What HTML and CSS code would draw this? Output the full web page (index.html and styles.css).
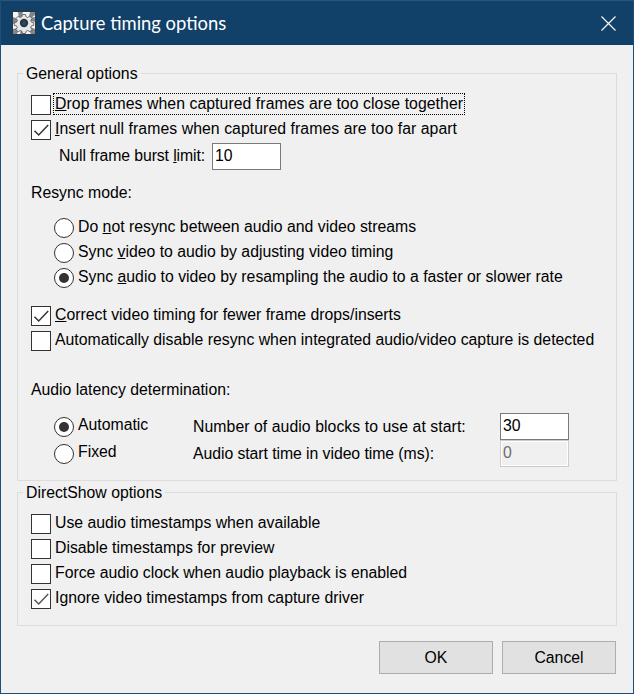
FILE: index.html
```html
<!DOCTYPE html>
<html lang="en">
<head>
    <meta charset="UTF-8">
    <title>Capture timing options</title>
    <link rel="stylesheet" href="styles.css">
</head>
<body>
    <div class="window">
        <div class="titlebar">
            <svg class="app-icon" width="24" height="24" viewBox="0 0 24 24">
                <rect x="0.5" y="0.5" width="23" height="23" fill="#f4f4f4" stroke="#2f353a"/>
                <path d="M1 6l5 2-1 4-4 1zM6 1h5l-1 4-3 2zM23 6v5l-4-1-2-3zM18 1l-1 4 2 2 4-3V1zM1 18l4-1 2 2-2 4H1zM23 18l-5-2-1 3 2 4h4zM8 23l1-5 3 1 1 4z" fill="#7f868c"/>
                <path d="M10.4 3.5h3.2l.5 2.3 1.7.7 2-1.3 2.2 2.2-1.3 2 .7 1.7 2.3.5v2.8l-2.3.5-.7 1.7 1.3 2-2.2 2.2-2-1.3-1.7.7-.5 2.3h-3.2l-.5-2.3-1.7-.7-2 1.3-2.2-2.2 1.3-2-.7-1.7-2.3-.5v-2.8l2.3-.5.7-1.7-1.3-2 2.2-2.2 2 1.3 1.7-.7z" fill="#e6e7e8" stroke="#4a4f54" stroke-width="0.8"/>
                <circle cx="12" cy="12" r="4.2" fill="#30363b"/>
                <circle cx="12" cy="12" r="2.2" fill="#1d4a70"/>
            </svg>
            <span class="title">Capture timing options</span>
            <svg class="close-icon" width="15" height="15" viewBox="0 0 15 15">
                <path d="M0.5 0.5l14 14M14.5 0.5l-14 14" stroke="#fff" stroke-width="1.1" fill="none"/>
            </svg>
        </div>

        <div class="content">
            <div class="group group-general">
                <div class="group-title">General options</div>

                <div class="stack">
                    <div class="row">
                        <span class="check"></span>
                        <span class="label focused loose"><u>D</u>rop frames when captured frames are too close together</span>
                    </div>
                    <div class="row">
                        <span class="check">
                            <svg width="18" height="18" viewBox="0 0 18 18"><path d="M2.5 9.7l4.2 4.3 9.5-10" fill="none" stroke="#333" stroke-width="1.5"/></svg>
                        </span>
                        <span class="label loose">
                            <u>I</u>nsert null frames when captured frames are too far apart
                        </span>
                    </div>
                </div>

                <div class="burst-row">
                    <span class="label burst-label">Null frame burst <u>l</u>imit:</span>
                    <span class="textbox">10</span>
                </div>

                <div class="section-label resync-label">Resync mode:</div>

                <div class="stack radio-stack">
                    <div class="row">
                        <span class="radio"></span>
                        <span class="label">Do <u>n</u>ot resync between audio and video streams</span>
                    </div>
                    <div class="row">
                        <span class="radio"></span>
                        <span class="label">Sync <u>v</u>ideo to audio by adjusting video timing</span>
                    </div>
                    <div class="row">
                        <span class="radio selected"></span>
                        <span class="label">Sync <u>a</u>udio to video by resampling the audio to a faster or slower rate</span>
                    </div>
                </div>

                <div class="stack correct-stack">
                    <div class="row">
                        <span class="check">
                            <svg width="18" height="18" viewBox="0 0 18 18"><path d="M2.5 9.7l4.2 4.3 9.5-10" fill="none" stroke="#333" stroke-width="1.5"/></svg>
                        </span>
                        <span class="label"><u>C</u>orrect video timing for fewer frame drops/inserts</span>
                    </div>
                    <div class="row">
                        <span class="check"></span>
                        <span class="label">Automatically disable resync when integrated audio/video capture is detected</span>
                    </div>
                </div>

                <div class="section-label latency-label">Audio latency determination:</div>

                <div class="latency-grid">
                    <div class="row">
                        <span class="radio selected"></span>
                        <span class="label radio-label">Automatic</span>
                    </div>
                    <span class="label field-label loose">Number of audio blocks to use at start:</span>
                    <span class="textbox wide">30</span>
                    <div class="row">
                        <span class="radio"></span>
                        <span class="label radio-label">Fixed</span>
                    </div>
                    <span class="label field-label tight">Audio start time in video time (ms):</span>
                    <span class="textbox wide disabled">0</span>
                </div>
            </div>

            <div class="group group-directshow">
                <div class="group-title">DirectShow options</div>

                <div class="stack">
                    <div class="row">
                        <span class="check"></span>
                        <span class="label">Use audio timestamps when available</span>
                    </div>
                    <div class="row">
                        <span class="check"></span>
                        <span class="label">Disable timestamps for preview</span>
                    </div>
                    <div class="row">
                        <span class="check"></span>
                        <span class="label">Force audio clock when audio playback is enabled</span>
                    </div>
                    <div class="row">
                        <span class="check">
                            <svg width="18" height="18" viewBox="0 0 18 18"><path d="M2.5 9.7l4.2 4.3 9.5-10" fill="none" stroke="#555" stroke-width="1.5"/></svg>
                        </span>
                        <span class="label">Ignore video timestamps from capture driver</span>
                    </div>
                </div>
            </div>

            <div class="buttons">
                <button class="btn">OK</button>
                <button class="btn">Cancel</button>
            </div>
        </div>
    </div>
</body>
</html>
```

FILE: styles.css
```css
body {
    margin: 0;
    font-family: "Liberation Sans", Arial, sans-serif;
    font-size: 15.8px;
    color: #000;
}
.window {
    width: 634px;
    height: 694px;
    box-sizing: border-box;
    background: #f0f0f0;
    border: 1px solid #1f4f78;
    border-top: none;
    overflow: hidden;
}
.titlebar {
    height: 45px;
    background: #114068;
    border-top: 1px solid #2a5580;
    box-sizing: border-box;
    display: flex;
    align-items: center;
    color: white;
    padding: 0 17px 0 11px;
}
.app-icon {
    flex: none;
    margin-right: 5px;
}
.title {
    flex: 1;
    font-family: "Lato", sans-serif;
    font-size: 18.4px;
}
.content {
    padding: 28px 16px 0 16px;
}
.group {
    border: 1px solid #dcdcdc;
    padding: 0 13px;
}
.group-general {
    height: 408px;
    box-sizing: border-box;
}
.group-directshow {
    margin-top: 11px;
    padding-bottom: 16px;
}
.group-title {
    width: fit-content;
    height: 20px;
    line-height: 20px;
    margin: -10px 0 11px -8px;
    padding: 0 3px;
    background: #f0f0f0;
}
.stack {
    display: flex;
    flex-direction: column;
    gap: 5px;
}
.row {
    display: flex;
    align-items: center;
    height: 20px;
}
.label {
    line-height: 18px;
    white-space: nowrap;
    position: relative;
    top: -1px;
}
.loose {
    letter-spacing: 0.06px;
}
.tight {
    letter-spacing: -0.06px;
}
.check {
    flex: none;
    width: 20px;
    height: 20px;
    box-sizing: border-box;
    border: 1px solid #333;
    background: white;
    margin-right: 4px;
    display: flex;
    align-items: center;
    justify-content: center;
}
.focused {
    outline: 1px dotted #000;
    outline-offset: 1px;
}
.radio {
    flex: none;
    width: 20px;
    height: 20px;
    box-sizing: border-box;
    border: 1px solid #333;
    border-radius: 50%;
    background: white;
    margin-right: 4px;
    display: flex;
    align-items: center;
    justify-content: center;
}
.selected::after {
    content: "";
    width: 10px;
    height: 10px;
    border-radius: 50%;
    background: #333;
}
.radio-stack {
    margin: 15px 0 0 23px;
}
.radio-label {
    top: -2px;
}
.correct-stack {
    margin-top: 18px;
}
.burst-row {
    display: flex;
    align-items: center;
    margin: 3px 0 0 28px;
}
.burst-label {
    width: 153px;
    letter-spacing: -0.1px;
}
.textbox {
    width: 69px;
    height: 27px;
    box-sizing: border-box;
    border: 1px solid #7a7a7a;
    background: white;
    padding-left: 2px;
    line-height: 23px;
}
.textbox.disabled {
    background: #f0f0f0;
    border-color: #ccc;
    box-shadow: inset 0 0 0 1px #fff;
    color: #6d6d6d;
}
.section-label {
    height: 20px;
    line-height: 20px;
}
.resync-label {
    margin-top: 13px;
}
.latency-label {
    margin-top: 29px;
}
.latency-grid {
    display: grid;
    grid-template-columns: 139px 307px 69px;
    grid-template-rows: 27px 27px;
    align-items: center;
    margin: 13px 0 0 23px;
}
.field-label {
    top: 0;
}
.buttons {
    display: flex;
    justify-content: flex-end;
    gap: 9px;
    margin-top: 15px;
    padding-right: 1px;
}
.btn {
    width: 114px;
    height: 33px;
    background: #e1e1e1;
    border: 1px solid #adadad;
    font-family: "Liberation Sans", Arial, sans-serif;
    font-size: 15.8px;
    color: #000;
    padding: 0;
}
```
